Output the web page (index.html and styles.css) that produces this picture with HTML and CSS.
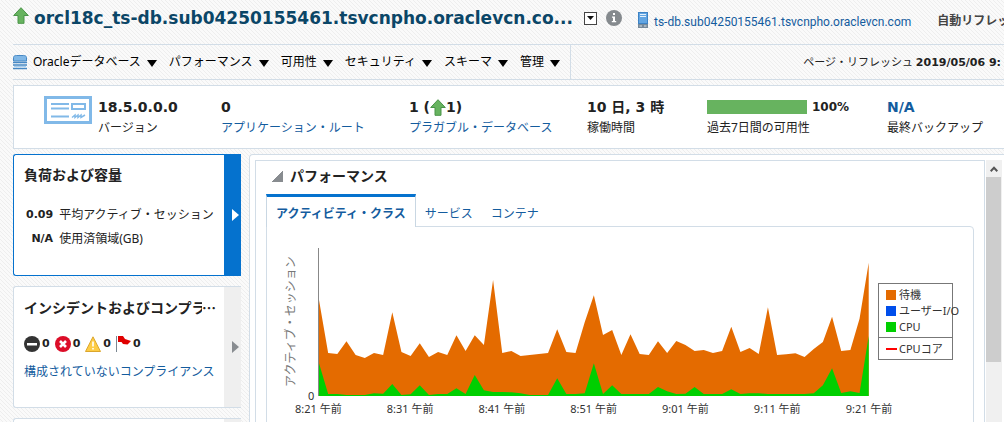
FILE: index.html
```html
<!DOCTYPE html>
<html lang="ja">
<head>
<meta charset="utf-8">
<title>orcl18c_ts-db</title>
<link rel="stylesheet" href="styles.css">
</head>
<body>
<svg class="defs" width="0" height="0" aria-hidden="true">
  <symbol id="up" viewBox="0 0 16 17"><path d="M8 .7 15.3 8.5H11V16.3H5V8.5H.7Z" fill="#67b35f" stroke="#4a9448" stroke-width="1"/></symbol>
</svg>
<header class="title-row">
  <svg class="up-icon" width="16" height="17"><use href="#up"/></svg>
  <h1>orcl18c_ts-db.sub04250155461.tsvcnpho.oraclevcn.co...</h1>
  <button class="drop" aria-label="ターゲット"><svg width="7" height="4" viewBox="0 0 7 4"><path d="M0 0H7L3.5 4Z" fill="#111"/></svg></button>
  <button class="info" aria-label="情報"><svg width="16" height="16" viewBox="0 0 16 16"><circle cx="8" cy="8" r="8" fill="#858a8e"/><path d="M7 3H9V5H7ZM6 6.500H9V11H10.200V12.300H5.800V11H7V7.800H6Z" fill="#fff"/></svg></button>
  <svg class="host-icon" width="10" height="16" viewBox="0 0 10 16"><rect x=".5" y=".5" width="9" height="11" fill="#62a5e2" stroke="#3d82c4"/><path d="M2 2.500H8M2 4.500H8" stroke="#e4f1fc"/><rect y="12" width="10" height="4" fill="#75899a"/><path d="M1.500 14H4M6 14H8.500" stroke="#d9e0e5"/></svg>
  <a class="host" href="#">ts-db.sub04250155461.tsvcnpho.oraclevcn.com</a>
  <span class="auto">自動リフレッシュ</span>
</header>

<div class="menu-row">
  <nav class="menu">
    <svg width="14" height="15" viewBox="0 0 14 15"><path d="M.5 6V2.500C.5 1 2 .5 3.500 .5H10.500C12 .5 13.500 1 13.500 2.500V6Z" fill="#80b7e6" stroke="#4688c4"/><path d="M0 7.500H14M0 10H14M0 13.500H14" stroke="#4688c4" stroke-width="1.500"/><path d="M1 11.500H13" stroke="#a5ceef"/></svg>
    <button>Oracleデータベース<i></i></button>
    <button>パフォーマンス<i></i></button>
    <button>可用性<i></i></button>
    <button>セキュリティ<i></i></button>
    <button>スキーマ<i></i></button>
    <button>管理<i></i></button>
  </nav>
  <p class="refreshed">ページ・リフレッシュ <b>2019/05/06 9:</b></p>
</div>

<section class="stats">
  <svg class="card-icon" width="48" height="28" viewBox="0 0 48 28"><rect x="1.500" y="1.500" width="45" height="25" fill="#fff" stroke="#81b9e8" stroke-width="3"/><path d="M7 8H25M7 12.500H25M7 20.500H25" stroke="#81b9e8" stroke-width="2"/><rect x="28" y="8" width="13" height="5" fill="#fff" stroke="#81b9e8" stroke-width="2"/><path d="M28 21.500 31 19V21.500L34 19V21.500L37 19V21.500L41 19" fill="none" stroke="#81b9e8" stroke-width="1.500"/></svg>
  <dl>
    <div><dd>18.5.0.0.0</dd><dt>バージョン</dt></div>
    <div><dd>0</dd><dt><a href="#">アプリケーション・ルート</a></dt></div>
    <div><dd>1 (<svg width="16" height="17"><use href="#up"/></svg>1)</dd><dt><a href="#">プラガブル・データベース</a></dt></div>
    <div><dd>10 日, 3 時</dd><dt>稼働時間</dt></div>
    <div><dd class="avail"><span class="bar"></span>100%</dd><dt>過去7日間の可用性</dt></div>
    <div><dd><a href="#">N/A</a></dd><dt>最終バックアップ</dt></div>
  </dl>
</section>

<main>
  <aside>
    <section class="card selected">
      <div class="card-body">
        <h2>負荷および容量</h2>
        <table>
          <tr><th>0.09</th><td>平均アクティブ・セッション</td></tr>
          <tr><th>N/A</th><td>使用済領域(GB)</td></tr>
        </table>
      </div>
      <button class="strip" aria-label="負荷および容量"><i></i></button>
    </section>
    <section class="card">
      <div class="card-body">
        <h2 class="cut"><span>インシデントおよびコンプラ</span>⋯</h2>
        <ul class="counts">
          <li><svg width="16" height="16" viewBox="0 0 16 16"><circle cx="8" cy="8" r="8" fill="#333"/><rect x="3" y="7" width="10" height="2.500" fill="#fff"/></svg>0</li>
          <li><svg width="16" height="16" viewBox="0 0 16 16"><circle cx="8" cy="8" r="8" fill="#dc0d28"/><path d="M5 5 11 11M11 5 5 11" stroke="#fff" stroke-width="2.600"/></svg>0</li>
          <li><svg width="16" height="16" viewBox="0 0 16 16"><path d="M8 .8 15.500 15.500H.5Z" fill="#fdcc45" stroke="#dba62d" stroke-linejoin="round"/><path d="M8 5.500V10.500M8 12V13.500" stroke="#fff" stroke-width="1.600"/></svg>0</li>
          <li><svg width="15" height="16" viewBox="0 0 15 16"><path d="M.5 0V16" stroke="#7b8792"/><path d="M2 0H7L9 3 15 5 11.500 8.500 7 8 5.500 6H2Z" fill="#e00000"/></svg>0</li>
        </ul>
        <a href="#">構成されていないコンプライアンス</a>
      </div>
      <button class="strip" aria-label="インシデント"><i></i></button>
    </section>
    <section class="card"><div class="card-body"></div><div class="strip"></div></section>
  </aside>

  <section class="panel">
    <div class="region">
      <h2><i class="disclose"></i>パフォーマンス</h2>
      <div class="tabs" role="tablist">
        <button class="on" role="tab" aria-selected="true">アクティビティ・クラス</button>
        <button role="tab">サービス</button>
        <button role="tab">コンテナ</button>
      </div>
      <div class="chart">
        <div class="y-title">アクティブ・セッション</div>
        <div class="zero">0</div>
        <div class="plot">
          <svg viewBox="0 0 600 444" preserveAspectRatio="none" role="img" aria-label="アクティブ・セッション">
            <polygon id="wait" fill="#e46b00"/>
            <polygon id="cpu" fill="#00cf00"/>
          </svg>
          <div class="ticks"><span>8:21 午前</span><span>8:31 午前</span><span>8:41 午前</span><span>8:51 午前</span><span>9:01 午前</span><span>9:11 午前</span><span>9:21 午前</span></div>
        </div>
        <ul class="legend">
          <li><i class="sw wait"></i>待機</li>
          <li><i class="sw io"></i>ユーザーI/O</li>
          <li><i class="sw cpu"></i>CPU</li>
          <li class="core"><i></i>CPUコア</li>
        </ul>
      </div>
    </div>
    <div class="scroll">
      <button aria-label="上へ"><svg width="8" height="6" viewBox="0 0 8 6"><path d="M.7 5.200 4 1.700 7.300 5.200" fill="none" stroke="#555" stroke-width="2"/></svg></button>
      <div class="thumb"></div>
    </div>
  </section>
</main>
<script src="chart.js"></script>
</body>
</html>
```
FILE: styles.css
```css
* { box-sizing: border-box; margin: 0; padding: 0; }
body {
  height: 100vh;
  display: flex;
  flex-direction: column;
  overflow: hidden;
  padding-left: 13px;
  font: 12px/16px "Noto Sans", "Noto Sans CJK JP", sans-serif;
  color: #222;
  white-space: nowrap;
  background: linear-gradient(45deg, #eee 12.5%, #fafafa 12.5% 50%, #eee 50% 62.5%, #fafafa 62.5%) 0 0 / 4px 4px;
}
a { color: #145c9e; text-decoration: none; }
button { font: inherit; color: inherit; background: none; border: 0; }
ul { list-style: none; }
svg { flex: none; }
.defs { position: absolute; }

.title-row {
  display: flex;
  align-items: center;
  height: 45px;
  padding-bottom: 8px;
  border-bottom: 1px solid #d2dde7;
}
.title-row > * { flex: none; }
.up-icon { margin-bottom: 6px; }
h1 {
  margin-left: 5px;
  font: bold 17px/24px "DejaVu Sans", sans-serif;
  color: #0b4667;
}
.drop {
  display: grid;
  place-items: center;
  width: 13px;
  height: 13px;
  margin-left: 11px;
  border: 1px solid #444;
  background: #fff;
}
.info { display: flex; margin-left: 9px; }
.host-icon { margin: 4px 6px 0 16px; }
.host { font: 12px/16px Roboto, sans-serif; padding-top: 8px; }
.auto { margin-left: 26px; padding-top: 6px; font-weight: bold; color: #444; }

.menu-row {
  display: flex;
  justify-content: space-between;
  height: 35px;
  border-bottom: 1px solid #d2dde7;
}
.menu {
  display: flex;
  align-items: center;
  padding-right: 10px;
  border-right: 1px solid #d2dde7;
  color: #000;
}
.menu button { display: flex; align-items: center; margin: 0 12px 0 0; }
.menu svg { margin-right: 6px; }
.menu button:last-child { margin-right: 0; }
.menu i {
  margin: 2px 0 0 6px;
  border: 5px solid transparent;
  border-top: 7px solid #000;
  border-bottom: 0;
}
.refreshed { align-self: center; padding-right: 3px; font-size: 11px; }
.refreshed b { font: bold 11px/16px "DejaVu Sans", sans-serif; }

.stats {
  display: flex;
  height: 64px;
  margin-top: 5px;
  padding: 10px 0 0 30px;
  border: 1px solid #d2dde7;
  border-right: 0;
  background: #fff;
}
.stats dl {
  flex: 1;
  display: grid;
  grid-template-columns: 123fr 188fr 178fr 120fr 180fr 117fr;
  margin-left: 6px;
}
.stats dl > div { min-width: 0; }
.stats dd {
  display: flex;
  align-items: center;
  height: 22px;
  font: bold 14px/22px "DejaVu Sans", "Noto Sans CJK JP", sans-serif;
  white-space: pre;
}
.stats dt { line-height: 20px; }
.stats dd.avail { font-size: 12px; }
.bar { width: 100px; height: 14px; margin-right: 5px; background: #67b35f; }

main { flex: 1; min-height: 0; display: flex; gap: 8px; margin-top: 5px; }
aside { flex: none; width: 228px; display: flex; flex-direction: column; gap: 10px; }
.card {
  flex: none;
  display: flex;
  height: 122px;
  border: 1px solid #d2dde7;
  border-right: 0;
  border-radius: 3px 0 0 3px;
  background: #fff;
}
.card-body { flex: 1; min-width: 0; padding: 10px 8px 0 10px; }
h2 { font: bold 14px/20px "Noto Sans", "Noto Sans CJK JP", sans-serif; }
.strip { width: 17px; display: grid; place-items: center; background: #efefef; }
.strip i { border: 6px solid transparent; border-left: 7px solid #888c90; border-right: 0; margin-left: 6px; }
.selected { border-color: #0572ce; }
.selected .strip { background: #0572ce; }
.selected .strip i { border-left-color: #fff; }
.card table { margin-top: 18px; border-spacing: 0; }
.card tr { height: 24px; }
.card th { padding: 0 6px 0 2px; text-align: right; font: bold 11px/20px "DejaVu Sans", sans-serif; }
.card td { line-height: 20px; }
.cut { display: flex; font-family: "Noto Sans CJK JP", sans-serif; }
.cut span { flex: 1; overflow: hidden; }
.counts { display: flex; gap: 5px; margin: 18px 0 11px; font: bold 11px/18px "DejaVu Sans", sans-serif; }
.counts li { display: flex; align-items: center; gap: 2px; }

.panel {
  flex: 1;
  min-width: 0;
  display: flex;
  gap: 1px;
  padding: 5px 2px 0 5px;
  border: 1px solid #d2dde7;
  border-width: 1px 0 0 1px;
  border-radius: 4px 0 0 0;
  background: #fff;
}
.region {
  flex: 1;
  min-width: 0;
  padding: 5px 10px 0;
  border: 1px solid #d2dde7;
  border-bottom: 0;
}
.region h2 { display: flex; align-items: center; height: 20px; }
.disclose { width: 11px; height: 11px; margin: 0 7px 0 6px; background: linear-gradient(135deg, transparent 50%, #888c90 50%); }
.tabs { display: flex; height: 33px; margin-top: 8px; color: #145c9e; }
.tabs button { padding: 6px 9px 0; }
.tabs .on {
  z-index: 1;
  padding-top: 3px;
  border: 1px solid #c9d7e3;
  border-top: 3px solid #0572ce;
  border-bottom: 0;
  background: #fff;
  font-weight: bold;
}
.chart {
  display: flex;
  height: 240px;
  margin-top: -1px;
  padding: 21px 20px 0 16px;
  border: 1px solid #d2dde7;
  border-radius: 0 4px 0 0;
  color: #333;
}
.y-title {
  height: 148px;
  writing-mode: vertical-rl;
  text-orientation: sideways;
  transform: rotate(180deg);
  text-align: center;
  color: #777;
}
.zero { padding: 140px 4px 0 9px; font-size: 11px; }
.plot { flex: 1; min-width: 0; }
.plot svg { display: block; width: 100%; height: 148px; border-left: 1px solid #888; }
.ticks { display: flex; justify-content: space-between; margin-top: 5px; font-size: 11px; }
.ticks span { width: 0; display: flex; justify-content: center; }
.legend {
  align-self: flex-start;
  width: 75px;
  margin: 35px 0 0 9px;
  padding-top: 3px;
  border: 1px solid #777;
  font-size: 11px;
}
.legend li { display: flex; align-items: center; height: 16px; padding-left: 7px; }
.sw { flex: none; width: 10px; height: 10px; margin-right: 3px; }
.wait { background: #e46b00; }
.io { background: #004eeb; }
.cpu { background: #00cf00; }
.legend .core { height: 22px; margin-top: 2px; border-top: 1px solid #777; }
.core i { width: 11px; height: 2px; margin-right: 2px; background: #f00; }

.scroll { flex: none; width: 16px; background: #f0f0f0; }
.scroll button { display: grid; place-items: center; width: 100%; height: 17px; }
.thumb { height: 185px; margin-right: 1px; background: #cdcdcd; }
```
FILE: chart.js
```js
const wait = [288,129,126,164,123,114,129,123,251,132,120,158,117,132,123,182,135,182,153,348,
  129,135,120,123,126,129,200,132,129,221,302,183,198,123,185,126,123,164,129,165,
  153,135,138,129,135,208,132,144,126,266,123,125,128,117,141,162,238,135,138,232,400];
const cpu = [98,6,6,3,3,3,8,7,36,3,5,32,3,6,6,23,6,63,17,12,
  12,11,8,3,3,3,53,6,6,8,98,6,32,6,6,6,6,27,14,6,
  7,27,6,6,6,20,6,8,8,6,6,6,6,6,8,32,83,9,14,9,180];
const area = (values) =>
  "0,444 " + values.map((v, i) => `${i * 10},${444 - v}`).join(" ") + " 600,444";
document.getElementById("wait").setAttribute("points", area(wait));
document.getElementById("cpu").setAttribute("points", area(cpu));
```
